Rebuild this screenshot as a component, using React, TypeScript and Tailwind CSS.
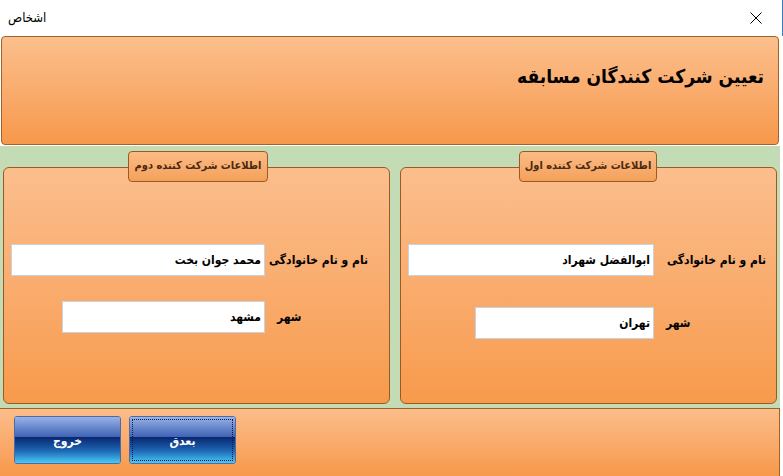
import React from "react";

const font = { fontFamily: '"DejaVu Sans Condensed", "DejaVu Sans", sans-serif' };

const Field = ({ label, value, labelW, inputW, near }: { label: string; value: string; labelW: string; inputW: string; near?: boolean }) => (
  <div className="flex items-center">
    <div className={`${labelW} whitespace-nowrap ${near ? "text-left pl-[12px]" : "text-right"} text-[12px] font-bold text-black`}>{label}</div>
    <div className={`${inputW} h-[32px] bg-white border border-[#c9d3e0] flex items-center px-[3px] text-[12px] font-bold text-black`}>
      {value}
    </div>
  </div>
);

const Group = ({ title, legendPos, children, w, pr }: { title: string; legendPos: string; children: React.ReactNode; w: string; pr: string }) => (
  <div className={`relative ${w} h-[237px] rounded-[6px] border border-[#9a5b22] bg-gradient-to-b from-[#fbbe8d] to-[#f79a4b] ${pr}`}>
    <div className={`absolute top-[-17px] ${legendPos} h-[31px] rounded-[4px] border border-[#9a5b22] bg-gradient-to-b from-[#fbbb86] to-[#f5a05a] flex items-center justify-center whitespace-nowrap text-[11px] font-bold text-[#4a2a10]`}>
      {title}
    </div>
    {children}
  </div>
);

const BlueButton = ({ text, focused }: { text: string; focused?: boolean }) => (
  <button className="relative w-[107px] h-[48px] rounded-[3px] border border-[#4a6aa8] overflow-hidden flex flex-col text-white text-[12px] font-bold">
    <div className="h-[20px] w-full bg-gradient-to-b from-[#9ab2e6] to-[#3f62b4]" />
    <div className="flex-1 w-full bg-gradient-to-b from-[#0a2670] via-[#1d62b0] to-[#4ccaf4]" />
    <span className="absolute inset-0 flex items-center justify-center pt-[2px]">{text}</span>
    {focused && <span className="absolute inset-[2px] border border-dotted border-[#0a1a3a]" />}
  </button>
);

export default function App() {
  return (
    <div className="w-[783px] h-[476px] bg-white overflow-hidden flex flex-col" style={font}>
      {/* title bar */}
      <div className="h-[36px] flex items-center justify-between pl-[8px] pr-[20px] border-r border-[#3c7fc4]">
        <span className="text-[13px] text-black font-normal">اشخاص</span>
        <svg width="12" height="12" viewBox="0 0 12 12" className="text-black">
          <path d="M0.5 0.5L11.5 11.5M11.5 0.5L0.5 11.5" stroke="currentColor" strokeWidth="1" />
        </svg>
      </div>

      <div className="w-[780px] flex-1 flex flex-col">
        {/* header */}
        <div className="ml-[1px] w-[778px] h-[109px] rounded-[4px] border border-[#a0622a] bg-gradient-to-b from-[#fbbf8c] to-[#f7984a] flex justify-end pt-[25px] pr-[14px]">
          <h1 dir="rtl" className="text-[19px] font-bold text-black whitespace-nowrap">تعیین شرکت کنندگان مسابقه</h1>
        </div>

        {/* participants */}
        <div className="mt-[1px] h-[262px] bg-[#c4dcb6] flex gap-[10px] pl-[3px] pt-[21px]">
          <Group title="اطلاعات شرکت کننده دوم" legendPos="left-[124px] w-[140px]" w="w-[387px]" pr="pr-[21px]">
            <div dir="rtl" className="pt-[76px] flex flex-col gap-[25px]">
              <Field label="نام و نام خانوادگی" value="محمد جوان بخت" labelW="w-[103px]" inputW="w-[254px]" />
              <Field label="شهر" value="مشهد" labelW="w-[103px]" inputW="w-[203px]" near />
            </div>
          </Group>
          <Group title="اطلاعات شرکت کننده اول" legendPos="left-[118px] w-[138px]" w="w-[377px]" pr="pr-[10px]">
            <div dir="rtl" className="pt-[76px] flex flex-col gap-[31px]">
              <Field label="نام و نام خانوادگی" value="ابوالفضل شهراد" labelW="w-[112px]" inputW="w-[246px]" />
              <Field label="شهر" value="تهران" labelW="w-[112px]" inputW="w-[179px]" near />
            </div>
          </Group>
        </div>

        {/* buttons */}
        <div className="flex-1 border-t border-r border-[#a0622a] bg-gradient-to-b from-[#fbbd8a] to-[#f7984a] flex items-start gap-[8px] pl-[14px] pt-[7px]">
          <BlueButton text="خروج" />
          <BlueButton text="بعدق" focused />
        </div>
      </div>
    </div>
  );
}
